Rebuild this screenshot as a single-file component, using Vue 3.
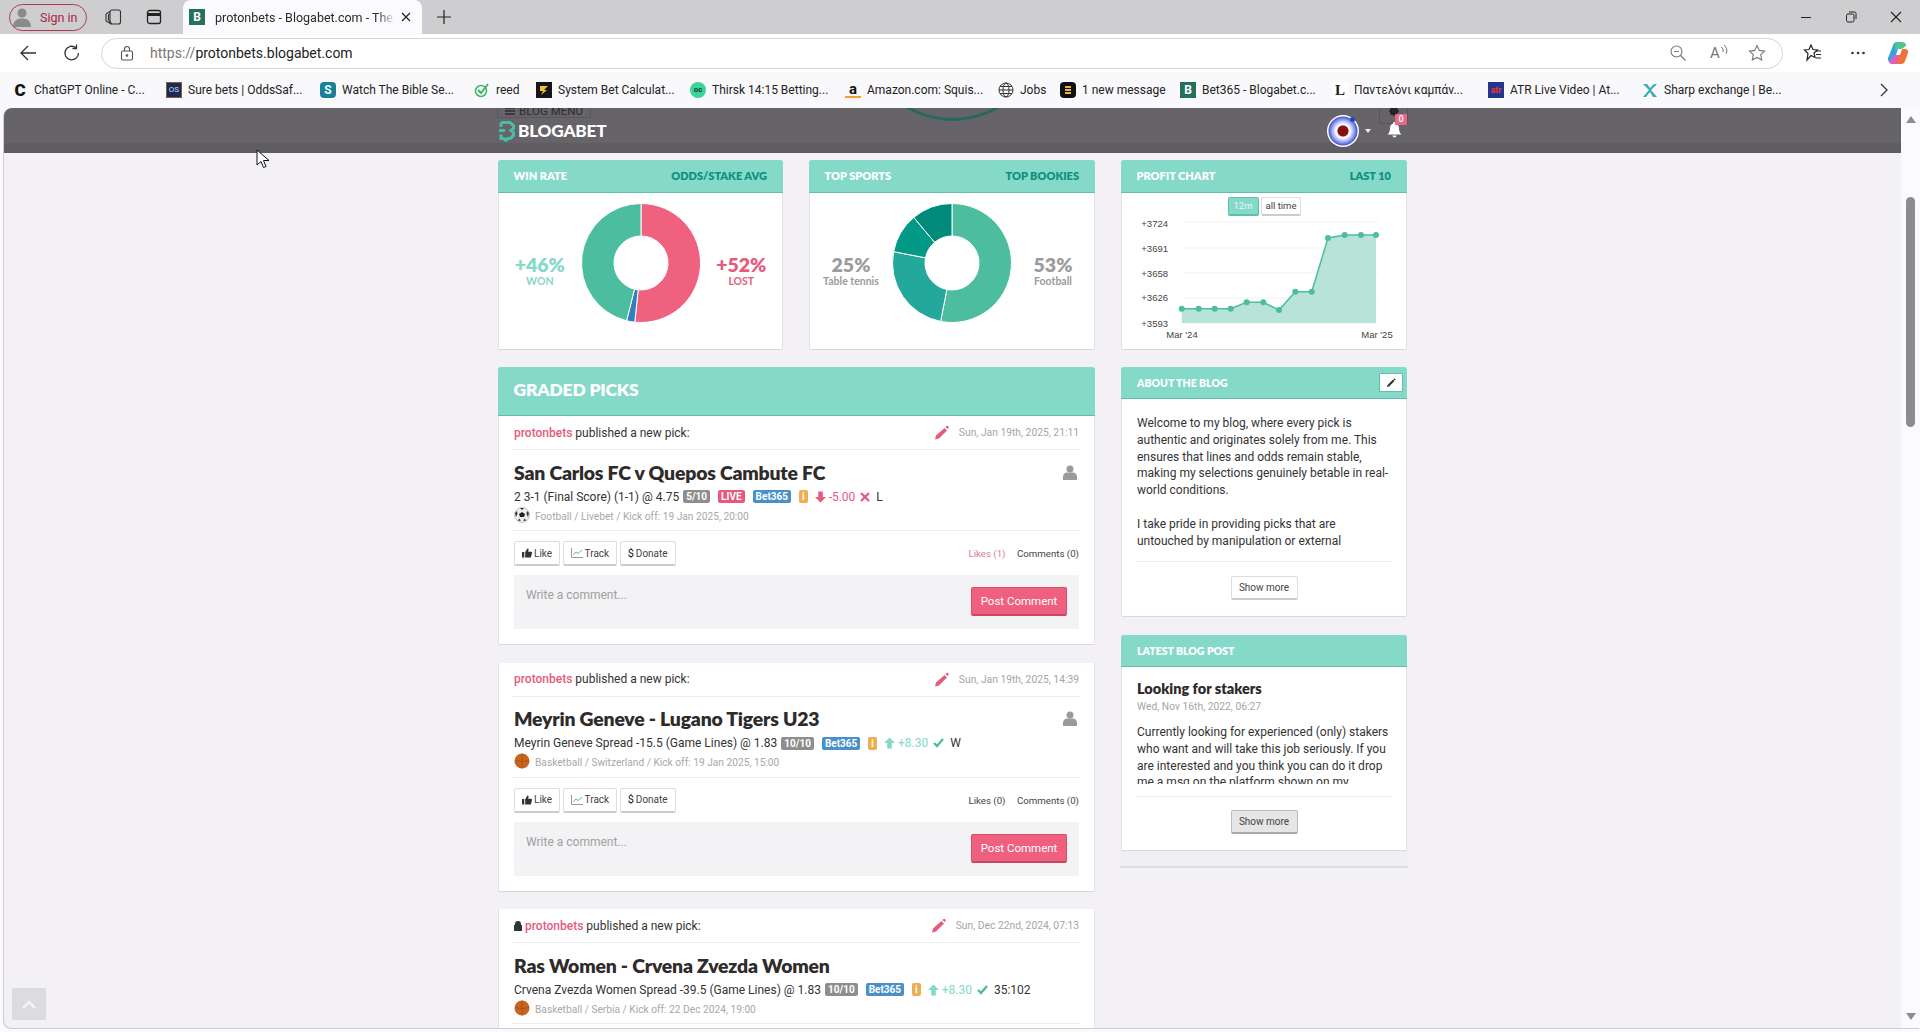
<template>
  <div class="browser">
    <!-- window chrome -->
    <div class="titlebar">
      <div class="signin">
        <svg width="22" height="22" viewBox="0 0 22 22"><circle cx="11" cy="7" r="4.5" fill="#8b8a8c" /><path d="M2 21c0-6 4-8.500 9-8.500s9 2.500 9 8.500z" fill="#8b8a8c" /></svg>
        <span>Sign in</span>
      </div>
      <svg class="tb-icon" style="margin-left: 16px" width="20" height="20" viewBox="0 0 20 20" fill="none" stroke="#333" stroke-width="1.100"><rect x="7" y="3" width="10.500" height="14" rx="2" /><path d="M7 4.500L3.800 6.500a1.500 1.500 0 0 0-.8 1.300v5.400a1.500 1.500 0 0 0 .8 1.300L8.500 17" /><path d="M7 7L5.500 8v5l3 3.500" /></svg>
      <svg class="tb-icon" style="margin-left: 22px" width="18" height="18" viewBox="0 0 18 18" fill="none" stroke="#222" stroke-width="1.300"><rect x="2.500" y="2.500" width="13" height="13" rx="2" /><path d="M2.500 6.500h13" stroke-width="3" /></svg>
      <div class="tab">
        <span class="fav fav-blog">B</span>
        <span class="tab-title">protonbets - Blogabet.com - The</span>
        <svg width="12" height="12" viewBox="0 0 12 12" stroke="#222" stroke-width="1.200"><path d="M2 2l8 8M10 2l-8 8" /></svg>
      </div>
      <svg class="plus" width="16" height="16" viewBox="0 0 16 16" stroke="#222" stroke-width="1.200"><path d="M8 1v14M1 8h14" /></svg>
      <div class="winctl">
        <svg width="12" height="12" viewBox="0 0 12 12" stroke="#222"><path d="M1 6.500h10" /></svg>
        <svg width="12" height="12" viewBox="0 0 12 12" fill="none" stroke="#222"><rect x="1.500" y="3" width="7.500" height="8" rx="1.500" /><path d="M4 1h5.500A1.500 1.500 0 0 1 11 2.500V8" /></svg>
        <svg width="12" height="12" viewBox="0 0 12 12" stroke="#222" stroke-width="1.100"><path d="M1 1l10 10M11 1L1 11" /></svg>
      </div>
    </div>

    <div class="toolbar">
      <svg class="nav-back" width="18" height="18" viewBox="0 0 18 18" fill="none" stroke="#333" stroke-width="1.300"><path d="M17 9H2M9 2L2 9l7 7" /></svg>
      <svg class="nav-reload" width="18" height="18" viewBox="0 0 18 18" fill="none" stroke="#333" stroke-width="1.300"><path d="M15.500 9A6.800 6.800 0 1 1 13 3.800" /><path d="M13.500 0.500v4h-4" /></svg>
      <div class="address">
        <svg width="14" height="16" viewBox="0 0 14 16" fill="none" stroke="#555" stroke-width="1.100"><rect x="1.500" y="6" width="11" height="9" rx="1.500" /><path d="M4.500 6V4a2.500 2.500 0 0 1 5 0v2" /><circle cx="7" cy="10.500" r=".8" fill="#555" /></svg>
        <span class="url"><span class="scheme">https://</span>protonbets.blogabet.com</span>
        <div class="addr-right">
          <svg width="18" height="18" viewBox="0 0 18 18" fill="none" stroke="#777" stroke-width="1.100"><circle cx="7.500" cy="7.500" r="5.500" /><path d="M5 7.500h5M11.500 11.500l5 5" /></svg>
          <span class="read">A<svg width="8" height="12" viewBox="0 0 8 12" fill="none" stroke="#777"><path d="M1 3a4 4 0 0 1 2 5M4 1a7 7 0 0 1 2 9" /></svg></span>
          <svg width="18" height="18" viewBox="0 0 18 18" fill="none" stroke="#777" stroke-width="1.100"><path d="M9 1.500l2.300 4.900 5.200.700-3.800 3.600 1 5.300L9 13.400l-4.700 2.600 1-5.300L1.500 7.100l5.200-.700z" /></svg>
        </div>
      </div>
      <div class="tool-right">
        <svg width="20" height="20" viewBox="0 0 20 20" fill="none" stroke="#222" stroke-width="1.200"><path d="M8 2l2 4.500 4.500.500-3.500 3 1 4.500L8 12.500 4 17l1-6.500L1.500 7 6 6.500z" /><path d="M13 8h5M13 11.500h5M13 15h5" /></svg>
        <svg width="16" height="6" viewBox="0 0 16 6" fill="#333"><circle cx="2.500" cy="3" r="1.300" /><circle cx="8" cy="3" r="1.300" /><circle cx="13.500" cy="3" r="1.300" /></svg>
        <svg class="copilot" width="22" height="24" viewBox="0 0 22 24"><path d="M7 2h8l-5 20H5a4 4 0 0 1-4-5z" fill="#36a3dc" /><path d="M8 1h7a4 4 0 0 1 4 4l-6 4H8z" fill="#4fc48b" /><path d="M14 8h4a3 3 0 0 1 3 4l-3 8a4 4 0 0 1-4 3H8z" fill="#f0703f" /><path d="M7 14h5l-3 9H4a3 3 0 0 1-2-2z" fill="#d95fc0" /><path d="M11 8h4l-2 6h-4z" fill="#fff" /></svg>
      </div>
    </div>

    <div class="bookmarks">
      <div v-for="b in bookmarks" :key="b.label" class="bm" :style="{ width: b.w + 'px' }">
        <svg v-if="b.kind === 'reed'" width="16" height="16" viewBox="0 0 16 16" fill="none" stroke="#3fb56a" stroke-width="2"><circle cx="7" cy="9" r="5.500" stroke-width="1.500" /><path d="M4 8l3 3 7-9" /></svg>
        <svg v-else-if="b.kind === 'globe'" width="16" height="16" viewBox="0 0 16 16" fill="none" stroke="#333"><circle cx="8" cy="8" r="7" /><ellipse cx="8" cy="8" rx="3" ry="7" /><path d="M1 8h14M2 4.500h12M2 11.500h12" /></svg>
        <svg v-else-if="b.kind === 'sharp'" width="16" height="16" viewBox="0 0 16 16"><path d="M1 2h4l3 4 4-4h3l-6 6 6 7h-4L8 10l-4 5H1l6-7z" fill="#39aeb0" /></svg>
        <svg v-else-if="b.kind === 'msg'" width="16" height="16" viewBox="0 0 16 16"><rect width="16" height="16" rx="4" fill="#111" /><path d="M5 5h6M5 8h6M5 11h6" stroke="#f0b03c" stroke-width="1.800" /></svg>
        <svg v-else-if="b.kind === 'sys'" width="16" height="16" viewBox="0 0 16 16"><rect width="16" height="16" fill="#16161a" /><path d="M4 4h8L8 8l3 0-6 5 2-4H4z" fill="#f2c230" /></svg>
        <span v-else class="fav" :class="'fav-' + b.kind">{{ b.glyph }}</span>
        <span class="bm-label">{{ b.label }}</span>
      </div>
      <svg class="bm-more" width="10" height="14" viewBox="0 0 10 14" fill="none" stroke="#333" stroke-width="1.300"><path d="M2 1l6 6-6 6" /></svg>
    </div>

    <div class="page">
      <div class="viewport">
        <header class="site-head">
          <div class="arc"></div>
          <div class="site-inner">
            <div class="menu-tab">
              <svg width="10" height="8" viewBox="0 0 10 8" stroke="#2c2c33" stroke-width="1.500"><path d="M0 1h10M0 4h10M0 7h10" /></svg>
              BLOG MENU
            </div>
            <div class="logo">
              <svg width="18" height="22" viewBox="0 0 18 22" fill="none" stroke="#48bda4" stroke-width="3"><path d="M3 2.500h9l3.500 3v3L13 10.500l2.500 2v3l-3.500 3H9.500L8 20.500 5.500 18.500H3v-4M3 7V2.500" /><path d="M1 10.500h6" /></svg>
              <span>BLOGABET</span>
            </div>
            <div class="head-right">
              <div class="avatar"><i></i></div>
              <span class="caret"></span>
              <div class="gear-tab">
                <svg width="10" height="10" viewBox="0 0 10 10"><circle cx="5" cy="5" r="3.200" fill="none" stroke="#222" stroke-width="2" /><path d="M5 0v10M0 5h10M1.500 1.500l7 7M8.500 1.500l-7 7" stroke="#222" stroke-width="1.200" /></svg>
              </div>
              <div class="bell">
                <svg width="15" height="16" viewBox="0 0 15 16" fill="#fff"><path d="M7.500 0a1.300 1.300 0 0 1 1.300 1.500C11 2 12 4 12 6.500c0 3.500 1.500 5 2.500 6H.5c1-1 2.500-2.500 2.500-6C3 4 4 2 6.200 1.500A1.300 1.300 0 0 1 7.500 0z" /><path d="M5.500 13.500h4a2 2 0 0 1-4 0z" /></svg>
                <b class="bell-count">0</b>
              </div>
            </div>
          </div>
        </header>

        <main class="wrap">
          <div class="stats">
            <section v-for="d in donuts" :key="d.left" class="card">
              <div class="card-head small-head">
                <span>{{ d.left }}</span>
                <span class="head-alt">{{ d.right }}</span>
              </div>
              <div class="donut-body">
                <div class="donut-label" :style="{ color: d.a.color }">
                  <strong>{{ d.a.value }}</strong>
                  <small>{{ d.a.name }}</small>
                </div>
                <svg width="120" height="120" viewBox="0 0 120 120">
                  <path v-for="(s, i) in d.slices" :key="i" :d="s.path" :fill="s.color" stroke="#fff" stroke-width="1" />
                </svg>
                <div class="donut-label" :style="{ color: d.b.color }">
                  <strong>{{ d.b.value }}</strong>
                  <small>{{ d.b.name }}</small>
                </div>
              </div>
            </section>

            <section class="card">
              <div class="card-head small-head">
                <span>PROFIT CHART</span>
                <span class="head-alt">LAST 10</span>
              </div>
              <div class="range-btns">
                <span class="range active">12m</span>
                <span class="range">all time</span>
              </div>
              <svg class="chart" width="284" height="127" viewBox="0 0 284 127">
                <g v-for="t in ticks" :key="t.label">
                  <line x1="61" x2="256" :y1="t.y" :y2="t.y" stroke="#f1f0f3" />
                  <text x="46" :y="t.ly" text-anchor="end">{{ t.label }}</text>
                </g>
                <path :d="areaPath" fill="#b7e3d8" />
                <polyline :points="linePoints" fill="none" stroke="#4dbd9f" stroke-width="1.500" />
                <circle v-for="(p, i) in chartPoints" :key="i" :cx="p[0]" :cy="p[1]" r="3" fill="#4dbd9f" />
                <text x="60" y="120" text-anchor="middle">Mar '24</text>
                <text x="255" y="120" text-anchor="middle">Mar '25</text>
              </svg>
            </section>
          </div>

          <div class="columns">
            <div class="picks">
              <div class="card-head graded-head"><span>GRADED PICKS</span></div>
              <article v-for="p in picks" :key="p.title" class="pick">
                <div class="pick-top">
                  <span class="published">
                    <svg v-if="p.locked" class="lock" width="8" height="10" viewBox="0 0 8 10"><path d="M1 4V3a3 3 0 0 1 6 0v1h1v6H0V4z" fill="#333" /></svg>
                    <b>protonbets</b> published a new pick:
                  </span>
                  <svg class="pencil" width="15" height="15" viewBox="0 0 15 15" fill="#e65b7b"><path d="M10.500 3L13 5.500 5 13.500 1 14.500 2 10.500zM11.500 2l1-1a1 1 0 0 1 1.300 0l.700.700a1 1 0 0 1 0 1.300l-1 1z" /></svg>
                  <span class="pick-date">{{ p.date }}</span>
                </div>
                <div class="pick-title">
                  <h3>{{ p.title }}</h3>
                  <svg v-if="!p.locked" width="14" height="15" viewBox="0 0 14 15" fill="#9a9a9a"><circle cx="7" cy="4" r="3.500" /><path d="M0 15v-3c0-3 2-4.500 4-4.500h6c2 0 4 1.500 4 4.500v3z" /></svg>
                </div>
                <div class="market">
                  <span>{{ p.market }}</span>
                  <span class="badge grey">{{ p.rating }}</span>
                  <span v-if="p.live" class="badge red">LIVE</span>
                  <span class="badge blue">Bet365</span>
                  <span class="badge orange">i</span>
                  <svg v-if="p.up" class="arrow" width="11" height="12" viewBox="0 0 12 12" fill="#84d9c9"><path d="M6 0l6 6H8.500v6h-5V6H0z" /></svg>
                  <svg v-else class="arrow" width="11" height="12" viewBox="0 0 12 12" fill="#e65b7b"><path d="M6 12L0 6h3.500V0h5v6H12z" /></svg>
                  <span :class="p.up ? 'gain' : 'loss'">{{ p.delta }}</span>
                  <svg v-if="p.up" class="mark" width="11" height="10" viewBox="0 0 11 10" fill="none" stroke="#4dbd9f" stroke-width="2.400"><path d="M1 5l3 3 6-7" /></svg>
                  <svg v-else class="mark" width="10" height="10" viewBox="0 0 10 10" fill="none" stroke="#e65b7b" stroke-width="2.400"><path d="M1 1l8 8M9 1l-8 8" /></svg>
                  <span class="outcome">{{ p.outcome }}</span>
                </div>
                <div class="meta">
                  <svg v-if="p.sport === 'football'" width="16" height="16" viewBox="0 0 16 16"><circle cx="8" cy="8" r="7.500" fill="#eee" stroke="#999" stroke-width=".5" /><path d="M8 5l3 2-1 3H6L5 7z" fill="#222" /><path d="M6 1h4L8 3zM1 6l2-2 .500 3-1.500 3zM15 6l-2-2-.500 3 1.500 3zM4 14l1-2.500 2 2zM12 14l-1-2.500-2 2z" fill="#333" /></svg>
                  <svg v-else width="16" height="16" viewBox="0 0 16 16"><circle cx="8" cy="8" r="7.500" fill="#c8641e" /><path d="M1 7c4 2 10 2 14 0M8 .500v15" stroke="#8a4210" stroke-width=".5" fill="none" /></svg>
                  <span>{{ p.meta }}</span>
                </div>
                <div class="actions">
                  <button class="btn">
                    <svg width="10" height="10" viewBox="0 0 11 10" fill="#333"><path d="M0 4h2.500v6H0zM3.500 4L6 0c1 0 1.500.800 1.200 1.800L6.800 3.500H10c.800 0 1.200.700 1 1.400L10 9c-.200.600-.600 1-1.200 1H3.500z" /></svg>
                    Like
                  </button>
                  <button class="btn">
                    <svg width="12" height="10" viewBox="0 0 12 10" fill="none" stroke="#4dbd9f"><path d="M.5 0v9.500H12" stroke="#999" /><path d="M2 7l3-3 2 1.500L11 2" /></svg>
                    Track
                  </button>
                  <button class="btn"><span class="dollar">$</span> Donate</button>
                  <span class="likes" :class="{ liked: p.likes > 0 }">Likes ({{ p.likes }})</span>
                  <span class="comments">Comments (0)</span>
                </div>
                <div class="comment-box">
                  <span class="placeholder">Write a comment...</span>
                  <button class="post">Post Comment</button>
                </div>
              </article>
            </div>

            <aside class="side">
              <section class="card side-card">
                <div class="card-head side-head">
                  <span>ABOUT THE BLOG</span>
                  <span class="edit">
                    <svg width="10" height="10" viewBox="0 0 10 10" fill="#333"><path d="M7 1.500L8.500 3 3 8.500 1 9l.500-2zM7.800.700a.8.8 0 0 1 1.100 0l.400.400a.8.8 0 0 1 0 1.100l-.400.400L7.400 1.100z" /></svg>
                  </span>
                </div>
                <div class="side-body">
                  <div class="about-text">
                    <p>Welcome to my blog, where every pick is authentic and originates solely from me. This ensures that lines and odds remain stable, making my selections genuinely betable in real-world conditions.</p>
                    <p>I take pride in providing picks that are untouched by manipulation or external</p>
                  </div>
                  <div class="show-row"><button class="show">Show more</button></div>
                </div>
              </section>

              <section class="card side-card latest">
                <div class="card-head side-head"><span>LATEST BLOG POST</span></div>
                <div class="side-body">
                  <h4>Looking for stakers</h4>
                  <div class="post-date">Wed, Nov 16th, 2022, 06:27</div>
                  <div class="post-text">Currently looking for experienced (only) stakers who want and will take this job seriously. If you are interested and you think you can do it drop me a msg on the platform shown on my</div>
                  <div class="show-row post-show"><button class="show hovered">Show more</button></div>
                </div>
              </section>
              <div class="side-end"></div>
            </aside>
          </div>
        </main>
      </div>

      <div class="scrollbar">
        <span class="sb-up"></span>
        <span class="sb-thumb"></span>
        <span class="sb-down"></span>
      </div>

      <div class="to-top">
        <svg width="14" height="9" viewBox="0 0 14 9" fill="none" stroke="#f4f3f5" stroke-width="2.500"><path d="M1 8l6-6 6 6" /></svg>
      </div>
      <svg class="cursor" width="14" height="20" viewBox="0 0 14 20"><path d="M1 1v15l4-3.500 2.500 6 2.500-1-2.500-6H13z" fill="#fff" stroke="#111" /></svg>
    </div>
  </div>
</template>

<script setup>
import { computed } from 'vue'

const bookmarks = [
  { label: 'ChatGPT Online - C...', kind: 'chatgpt', glyph: 'C', w: 154 },
  { label: 'Sure bets | OddsSaf...', kind: 'os', glyph: 'OS', w: 154 },
  { label: 'Watch The Bible Se...', kind: 'bible', glyph: 'S', w: 154 },
  { label: 'reed', kind: 'reed', w: 62 },
  { label: 'System Bet Calculat...', kind: 'sys', w: 154 },
  { label: 'Thirsk 14:15 Betting...', kind: 'thirsk', glyph: 'oc', w: 155 },
  { label: 'Amazon.com: Squis...', kind: 'amazon', glyph: 'a', w: 153 },
  { label: 'Jobs', kind: 'globe', w: 62 },
  { label: '1 new message', kind: 'msg', w: 120 },
  { label: 'Bet365 - Blogabet.c...', kind: 'blog', glyph: 'B', w: 152 },
  { label: 'Παντελόνι καμπάν...', kind: 'serif', glyph: 'L', w: 156 },
  { label: 'ATR Live Video | At...', kind: 'atr', glyph: 'atr', w: 154 },
  { label: 'Sharp exchange | Be...', kind: 'sharp', w: 150 }
]

// donut slice as a ring segment, angles in degrees clockwise from the top
const ring = (from, to) => {
  const pt = (r, a) => {
    const rad = (a - 90) * Math.PI / 180
    return `${(60 + r * Math.cos(rad)).toFixed(2)} ${(60 + r * Math.sin(rad)).toFixed(2)}`
  }
  const big = to - from > 180 ? 1 : 0
  return `M${pt(59.5, from)}A59.5 59.5 0 ${big} 1 ${pt(59.5, to)}L${pt(27, to)}A27 27 0 ${big} 0 ${pt(27, from)}Z`
}

const makeSlices = (list) => list.map(s => ({ path: ring(s[0], s[1]), color: s[2] }))

const donuts = [
  {
    left: 'WIN RATE',
    right: 'ODDS/STAKE AVG',
    a: { value: '+46%', name: 'WON', color: '#84d9c9' },
    b: { value: '+52%', name: 'LOST', color: '#e65b7b' },
    slices: makeSlices([[0, 186, '#f0607f'], [186, 194, '#2f7fc1'], [194, 360, '#4dbd9f']])
  },
  {
    left: 'TOP SPORTS',
    right: 'TOP BOOKIES',
    a: { value: '25%', name: 'Table tennis', color: '#9b9b9b' },
    b: { value: '53%', name: 'Football', color: '#9b9b9b' },
    slices: makeSlices([[0, 191, '#4dbd9f'], [191, 281, '#25a89c'], [281, 320, '#029a87'], [320, 360, '#008a79']])
  }
]

const ticks = [
  { label: '+3724', y: 4, ly: 9 },
  { label: '+3691', y: 30, ly: 34 },
  { label: '+3658', y: 55, ly: 59 },
  { label: '+3626', y: 80, ly: 83 },
  { label: '+3593', y: 105, ly: 109 }
]

const chartPoints = [
  [215, 476], [266, 476], [314, 476], [362, 476], [410, 457], [460, 457], [507, 480],
  [556, 425], [605, 425], [654, 264], [704, 255], [753, 255], [798, 255]
].map(p => [+(p[0] / 3 - 12).toFixed(1), +(p[1] / 3 - 68).toFixed(1)])

const linePoints = computed(() => chartPoints.map(p => p.join(',')).join(' '))
const areaPath = computed(() => {
  const first = chartPoints[0]
  const last = chartPoints[chartPoints.length - 1]
  return `M${first[0]} 105L${linePoints.value.replace(/ /g, 'L').replace(/,/g, ' ')}L${last[0]} 105Z`
})

const picks = [
  {
    date: 'Sun, Jan 19th, 2025, 21:11',
    title: 'San Carlos FC v Quepos Cambute FC',
    market: '2 3-1 (Final Score) (1-1) @ 4.75',
    rating: '5/10',
    live: true,
    up: false,
    delta: '-5.00',
    outcome: 'L',
    sport: 'football',
    meta: 'Football / Livebet / Kick off: 19 Jan 2025, 20:00',
    likes: 1
  },
  {
    date: 'Sun, Jan 19th, 2025, 14:39',
    title: 'Meyrin Geneve - Lugano Tigers U23',
    market: 'Meyrin Geneve Spread -15.5 (Game Lines) @ 1.83',
    rating: '10/10',
    up: true,
    delta: '+8.30',
    outcome: 'W',
    sport: 'basketball',
    meta: 'Basketball / Switzerland / Kick off: 19 Jan 2025, 15:00',
    likes: 0
  },
  {
    locked: true,
    date: 'Sun, Dec 22nd, 2024, 07:13',
    title: 'Ras Women - Crvena Zvezda Women',
    market: 'Crvena Zvezda Women Spread -39.5 (Game Lines) @ 1.83',
    rating: '10/10',
    up: true,
    delta: '+8.30',
    outcome: '35:102',
    sport: 'basketball',
    meta: 'Basketball / Serbia / Kick off: 22 Dec 2024, 19:00',
    likes: 0
  }
]
</script>

<style>
html, body { margin: 0; overflow: hidden; }
</style>

<style scoped>
.browser {
  height: 1032px;
  display: flex;
  flex-direction: column;
  overflow: hidden;
  background: #fbfafc;
  font-family: Roboto, "Noto Sans", sans-serif;
  color: #333;
}
svg { display: block; flex: none; }

/* chrome */
.titlebar {
  height: 34px;
  background: #cecdcf;
  display: flex;
  align-items: center;
  padding-left: 9px;
  position: relative;
}
.signin {
  width: 78px;
  height: 27px;
  box-sizing: border-box;
  border: 1px solid #b3384f;
  border-radius: 14px;
  display: flex;
  align-items: center;
  gap: 7px;
  padding-left: 1px;
  font-size: 12.500px;
  color: #a92740;
  overflow: hidden;
}
.tab {
  margin-left: 20px;
  width: 239px;
  height: 34px;
  box-sizing: border-box;
  background: #fbfafc;
  border-radius: 8px 8px 0 0;
  display: flex;
  align-items: center;
  padding: 0 10px 0 6px;
}
.fav {
  width: 16px;
  height: 16px;
  flex: none;
  display: flex;
  align-items: center;
  justify-content: center;
  font-weight: 700;
  font-size: 12px;
  line-height: 16px;
}
.fav-blog { background: #27705e; color: #fff; }
.fav-chatgpt { color: #111; font-size: 17px; font-weight: 900; }
.fav-os { background: #1b2a57; color: #cdd6ea; font-size: 8px; font-weight: 400; border: 1px solid #8a5a3a; box-sizing: border-box; }
.fav-bible { background: #1f7f96; color: #dff; border-radius: 4px; }
.fav-thirsk { background: #3fd39a; color: #044; border-radius: 50%; font-size: 8px; }
.fav-amazon { color: #111; font-size: 15px; border-bottom: 2px solid #f0a030; box-sizing: border-box; }
.fav-serif { font-family: "Liberation Serif", serif; font-size: 15px; color: #222; background: #fff; }
.fav-atr { background: #24358f; color: #e33; font-size: 8.500px; }
.tab-title {
  margin-left: 10px;
  width: 180px;
  flex: none;
  font-size: 12.500px;
  white-space: nowrap;
  overflow: hidden;
  color: #2a2a2a;
  -webkit-mask-image: linear-gradient(90deg, #000 90%, transparent);
}
.tab > svg { margin-left: 5px; }
.plus { margin-left: 14px; }
.winctl {
  margin-left: auto;
  display: flex;
  gap: 33px;
  padding-right: 18px;
}
.toolbar {
  height: 38px;
  display: flex;
  align-items: center;
  background: #fff;
}
.nav-back { margin-left: 19px; }
.nav-reload { margin-left: 26px; }
.address {
  margin-left: 20px;
  width: 1682px;
  height: 31px;
  box-sizing: border-box;
  border: 1px solid #d6d5d8;
  border-radius: 16px;
  display: flex;
  align-items: center;
  padding-left: 18px;
  background: #fff;
}
.url { margin-left: 16px; font-size: 14px; color: #222; }
.scheme { color: #777; }
.addr-right {
  margin-left: auto;
  display: flex;
  align-items: center;
  gap: 23px;
  padding-right: 16px;
}
.read { display: flex; font-size: 15px; color: #777; width: 15px; }
.tool-right {
  margin-left: 20px;
  display: flex;
  align-items: center;
  gap: 27px;
}
.copilot { margin-left: -6px; }
.bookmarks {
  height: 36px;
  background: #f9f8fb;
  display: flex;
  align-items: center;
  padding-left: 12px;
  position: relative;
}
.bm {
  display: flex;
  align-items: center;
  gap: 6px;
  flex: none;
  font-size: 12px;
  color: #222;
  white-space: nowrap;
}
.bm-more { margin-left: auto; margin-right: 31px; }

/* page */
.page {
  flex: 1;
  min-height: 0;
  margin: 0 0 4px 4px;
  display: flex;
  position: relative;
  background: #f3f1f5;
  border-radius: 8px 0 0 8px;
  box-shadow: -1px 1px 0 #cfcdd2;
}
.viewport { flex: 1; min-width: 0; overflow: hidden; border-radius: 8px 0 0 8px; }
.site-head {
  height: 45px;
  background: linear-gradient(#666468 0, #666468 35px, #5f5d61 35px);
  position: relative;
  overflow: hidden;
}
.arc {
  position: absolute;
  left: 857px;
  top: -170px;
  width: 183px;
  height: 183px;
  border-radius: 50%;
  border: 3px solid #26695e;
  box-sizing: border-box;
}
.site-inner {
  width: 909px;
  height: 45px;
  margin: 0 auto;
  display: flex;
  align-items: center;
  justify-content: space-between;
  position: relative;
}
.menu-tab {
  position: absolute;
  left: -1px;
  top: -3px;
  width: 94px;
  height: 13px;
  box-sizing: border-box;
  border: 1px solid #58565a;
  border-top: 0;
  display: flex;
  align-items: center;
  justify-content: center;
  gap: 4px;
  font-size: 11.500px;
  color: #2c2c33;
  white-space: nowrap;
}
.logo {
  display: flex;
  align-items: center;
  gap: 2px;
  font-family: Lato, sans-serif;
  font-weight: 900;
  font-size: 17.200px;
  letter-spacing: -.2px;
  color: #fff;
}
.head-right { display: flex; align-items: center; margin-right: 5px; }
.avatar {
  width: 32px;
  height: 32px;
  border-radius: 50%;
  background: radial-gradient(circle, #8a1010 0 5px, #eef 6px, #fff 7px, #7f8fe8 12px, #4a5ad0 14px, #fff 15px);
  position: relative;
  margin-top: 1px;
}
.avatar i {
  position: absolute;
  right: 4px;
  top: 2px;
  width: 5px;
  height: 5px;
  border-radius: 50%;
  background: #1c47c8;
}
.caret {
  margin-left: 6px;
  border: 3px solid transparent;
  border-top: 4px solid #eee;
  border-bottom: 0;
}
.gear-tab {
  position: absolute;
  left: 881px;
  top: -4px;
  width: 29px;
  height: 20px;
  box-sizing: border-box;
  border: 1px solid #58565a;
  border-top: 0;
  display: flex;
  justify-content: center;
  padding-top: 2px;
}
.bell { margin-left: 16px; margin-top: -1px; position: relative; }
.bell-count {
  position: absolute;
  left: 8px;
  top: -8px;
  width: 12px;
  height: 11px;
  background: #e8688a;
  border-radius: 1px;
  color: #fff;
  font-size: 9px;
  font-weight: 500;
  line-height: 11px;
  text-align: center;
}
.wrap {
  width: 909px;
  margin: 0 auto;
  padding-top: 7px;
}
.stats {
  display: grid;
  grid-template-columns: 285px 286px 286px;
  gap: 26px;
  height: 190px;
}
.card {
  background: #fff;
  box-shadow: inset 1px 0 #e4e3e7, inset -1px 0 #e4e3e7, inset 0 -1px #d9d8dc;
  border-radius: 3px 3px 0 0;
  display: flex;
  flex-direction: column;
  min-width: 0;
}
.card-head {
  background: #84d9c9;
  border-bottom: 1px solid #63bdac;
  border-radius: 3px 3px 0 0;
  display: flex;
  align-items: center;
  justify-content: space-between;
  box-sizing: border-box;
  font-family: Lato, sans-serif;
  font-weight: 800;
  color: #fff;
}
.small-head {
  height: 33px;
  padding: 0 16px 2px 15.500px;
  font-size: 11px;
}
.head-alt { color: #0f8f7e; }
.donut-body {
  display: grid;
  grid-template-columns: 1fr 120px 1fr;
  padding: 10px 1px 0;
}
.donut-label {
  margin-top: 51px;
  display: flex;
  flex-direction: column;
  align-items: center;
  font-family: Lato, sans-serif;
  font-weight: 700;
}
.donut-label strong { font-size: 19.500px; line-height: 21px; font-weight: 800; }
.donut-label small { font-size: 10.500px; line-height: 12px; white-space: nowrap; }
.range-btns {
  display: flex;
  justify-content: center;
  gap: 2px;
  margin: 4px 0 2px;
  padding-right: 1px;
  height: 19px;
  padding-left: 2px;
}
.range {
  box-sizing: border-box;
  border: 1px solid #ddd;
  border-bottom: 2px solid #ccc;
  border-radius: 2px;
  padding: 0 4px;
  font-size: 9.500px;
  line-height: 16px;
  color: #444;
  background: #fff;
}
.range.active {
  background: #84d9c9;
  border-color: #63bdac;
  color: #e8fbf7;
  padding: 0 5px;
}
.chart { margin-left: 1px; }
.chart text { font-family: "Liberation Sans", Arial, sans-serif; font-size: 9.500px; fill: #444; }

/* lower columns */
.columns {
  display: grid;
  grid-template-columns: 597px 286px;
  gap: 26px;
  margin-top: 17px;
  align-items: start;
}
.graded-head {
  height: 49px;
  padding: 0 16px 4px 15.500px;
  font-size: 17.500px;
  letter-spacing: -.2px;
}
.pick {
  background: #fff;
  padding: 0 16px 16px;
  box-shadow: inset 1px 0 #e4e3e7, inset -1px 0 #e4e3e7, inset 0 -1px #d9d8dc;
  margin-bottom: 17.500px;
}
.pick-top {
  height: 34px;
  box-sizing: border-box;
  margin: 0 -2px;
  padding: 0 2px;
  border-bottom: 1px solid #ececef;
  display: flex;
  align-items: center;
  font-size: 12px;
}
.published b { color: #e65b7b; font-weight: 500; }
.lock { display: inline-block; margin-right: 3px; vertical-align: -1px; }
.pencil { margin-left: auto; margin-right: 10px; }
.pick-date { font-size: 10.300px; color: #a5a5a5; white-space: nowrap; }
.pick-title {
  margin-top: 10px;
  height: 24px;
  display: flex;
  align-items: center;
  justify-content: space-between;
  padding-right: 2px;
}
.pick-title h3 {
  margin: 0;
  font-family: Lato, sans-serif;
  font-size: 19.400px;
  font-weight: 800;
  letter-spacing: -.2px;
  color: #2f2b2b;
}
.market {
  margin-top: 4px;
  height: 17px;
  display: flex;
  align-items: center;
  font-size: 12px;
  color: #333;
  white-space: nowrap;
}
.badge {
  height: 13px;
  border-radius: 2px;
  padding: 0 3px;
  margin-left: 8px;
  font-size: 10px;
  font-weight: 700;
  line-height: 13px;
  color: #fff;
}
.market > span:first-child + .badge { margin-left: 4px; }
.grey { background: #8e8e8e; }
.red { background: #e65b7b; }
.blue { background: #4a90c8; }
.orange { background: #f0ad4e; padding: 0 3px; }
.arrow { margin-left: 7px; margin-right: 3px; }
.gain { color: #84d9c9; }
.loss { color: #e65b7b; }
.mark { margin-left: 5px; margin-right: 6px; }
.outcome { color: #333; }
.meta {
  margin: 3px -2px 0;
  padding: 0 2px 6px;
  height: 16px;
  display: flex;
  align-items: center;
  gap: 5px;
  border-bottom: 1px solid #ececef;
  font-size: 10.200px;
  color: #a8a8a8;
}
.meta svg { margin-top: -3px; }
.actions {
  margin-top: 10px;
  height: 25px;
  display: flex;
  align-items: center;
  gap: 2.500px;
  font-size: 9.700px;
}
.btn {
  height: 25px;
  box-sizing: border-box;
  border: 1px solid #ddd;
  border-bottom: 2px solid #ccc;
  border-radius: 2px;
  background: #fff;
  padding: 0 7px;
  display: flex;
  align-items: center;
  gap: 2px;
  font-family: Roboto, sans-serif;
  font-size: 10px;
  color: #444;
}
.dollar { font-size: 11px; color: #222; }
.likes { margin-left: auto; color: #444; }
.likes.liked { color: #d87a9c; }
.comments { margin-left: 9px; color: #444; }
.comment-box {
  margin-top: 9px;
  height: 54px;
  padding: 12px 12px 0 12px;
  box-sizing: border-box;
  background: #f3f2f5;
  display: flex;
  justify-content: space-between;
  align-items: flex-start;
}
.placeholder { font-size: 12px; line-height: 16px; color: #a0a0a0; }
.post {
  width: 96px;
  height: 29px;
  box-sizing: border-box;
  border: 1px solid #d9506f;
  border-bottom: 2px solid #c94765;
  border-radius: 2px;
  background: #ee5f80;
  color: #fff;
  font-family: Roboto, sans-serif;
  font-size: 11.500px;
  padding: 0;
}
.side-card { margin-bottom: 18px; }
.latest { margin-bottom: 0; }
.side-head {
  height: 32px;
  padding: 0 4px 0 16px;
  font-size: 10.500px;
}
.edit {
  width: 24px;
  height: 19px;
  box-sizing: border-box;
  background: #fff;
  border: 1px solid #63bdac;
  border-radius: 1px;
  display: flex;
  align-items: center;
  justify-content: center;
}
.side-body { padding: 16px 16px 17px; }
.about-text {
  height: 133px;
  margin-bottom: 13px;
  overflow: hidden;
  font-size: 12px;
  line-height: 16.800px;
  color: #333;
}
.about-text p { margin: 0 0 16.800px; }
.show-row {
  margin: 0 -2px;
  padding-top: 14px;
  border-top: 1px solid #ececef;
  display: flex;
  justify-content: center;
}
.post-show { margin-top: 12px; padding-top: 13px; }
.show {
  width: 67px;
  height: 24px;
  box-sizing: border-box;
  border: 1px solid #ddd;
  border-bottom: 2px solid #ccc;
  border-radius: 2px;
  background: #fff;
  font-family: Roboto, sans-serif;
  font-size: 10px;
  color: #444;
  padding: 0;
}
.show.hovered { background: #e6e6e6; border-color: #bbb; border-bottom-color: #aaa; }
.latest .side-body { padding-top: 13px; }
.latest h4 {
  margin: 0;
  font-family: Lato, sans-serif;
  font-size: 14.500px;
  font-weight: 800;
  line-height: 18px;
  color: #2f2b2b;
}
.post-date {
  margin-top: 2px;
  font-size: 10.300px;
  line-height: 14px;
  color: #a5a5a5;
}
.post-text {
  margin-top: 10px;
  height: 60px;
  overflow: hidden;
  font-size: 12px;
  line-height: 16.800px;
  color: #333;
}
.side-end {
  height: 17px;
  margin: 0 -1px;
  box-sizing: border-box;
  background: #f0eff2;
  border-bottom: 2px solid #dfdee2;
}

/* scrollbar + overlays */
.scrollbar {
  width: 19px;
  flex: none;
  background: #fbfafc;
  display: flex;
  flex-direction: column;
  align-items: center;
  position: relative;
}
.sb-up {
  margin-top: 8px;
  border: 5px solid transparent;
  border-bottom: 7px solid #8d8b8f;
  border-top: 0;
}
.sb-thumb {
  margin-top: 74px;
  width: 9px;
  height: 230px;
  border-radius: 5px;
  background: #8d8b8f;
}
.sb-down {
  margin-top: auto;
  margin-bottom: 8px;
  border: 5px solid transparent;
  border-top: 7px solid #8d8b8f;
  border-bottom: 0;
}
.to-top {
  position: absolute;
  left: 8px;
  bottom: 8px;
  width: 34px;
  height: 32px;
  border-radius: 2px;
  background: #dcdbde;
  display: flex;
  align-items: center;
  justify-content: center;
}
.cursor {
  position: absolute;
  left: 252px;
  top: 41px;
}
</style>
